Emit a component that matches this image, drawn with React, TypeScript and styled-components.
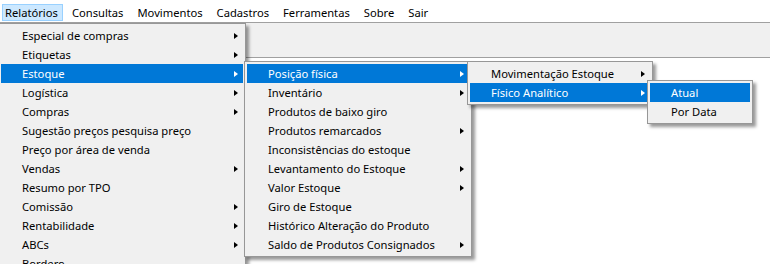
import styled, { createGlobalStyle } from "styled-components";

const GlobalStyle = createGlobalStyle`
  html, body {
    margin: 0;
    padding: 0;
    width: 770px;
    height: 264px;
    overflow: hidden;
    background: #ffffff;
  }
  body {
    font-family: "Noto Sans", "Open Sans", sans-serif;
    font-size: 11.2px;
    color: #000;
  }
`;

type Item = { label: string; sub?: boolean; open?: Submenu };
type Submenu = { items: Item[]; width: number; overlap: number };

const topMenu = ["Relatórios", "Consultas", "Movimentos", "Cadastros", "Ferramentas", "Sobre", "Sair"];

const fisico: Submenu = {
  width: 106,
  overlap: 3,
  items: [{ label: "Atual", open: { width: 0, overlap: 0, items: [] } }, { label: "Por Data" }],
};

const posicao: Submenu = {
  width: 186,
  overlap: 2,
  items: [
    { label: "Movimentação Estoque", sub: true },
    { label: "Físico Analítico", sub: true, open: fisico },
  ],
};

const estoque: Submenu = {
  width: 228,
  overlap: -1,
  items: [
    { label: "Posição física", sub: true, open: posicao },
    { label: "Inventário", sub: true },
    { label: "Produtos de baixo giro" },
    { label: "Produtos remarcados", sub: true },
    { label: "Inconsistências do estoque" },
    { label: "Levantamento do Estoque", sub: true },
    { label: "Valor Estoque", sub: true },
    { label: "Giro de Estoque" },
    { label: "Histórico Alteração do Produto" },
    { label: "Saldo de Produtos Consignados", sub: true },
  ],
};

const relatorios: Item[] = [
  { label: "Especial de compras", sub: true },
  { label: "Etiquetas", sub: true },
  { label: "Estoque", sub: true, open: estoque },
  { label: "Logística", sub: true },
  { label: "Compras", sub: true },
  { label: "Sugestão preços pesquisa preço" },
  { label: "Preço por área de venda" },
  { label: "Vendas", sub: true },
  { label: "Resumo por TPO" },
  { label: "Comissão", sub: true },
  { label: "Rentabilidade", sub: true },
  { label: "ABCs", sub: true },
  { label: "Bordero" },
];

const MenuList = ({ items }: { items: Item[] }) => (
  <>
    {items.map((it) => {
      const active = !!it.open;
      return (
        <MenuItem key={it.label} $active={active}>
          <span>{it.label}</span>
          {it.sub && <Arrow $active={active} />}
          {it.open && it.open.items.length > 0 && (
            <SubMenu $width={it.open.width} $overlap={it.open.overlap}>
              <MenuList items={it.open.items} />
            </SubMenu>
          )}
        </MenuItem>
      );
    })}
  </>
);

const App: React.FC = () => {
  return (
    <Screen>
      <GlobalStyle />
      <MenuBar>
        {topMenu.map((m, i) => (
          <BarItem key={m} $open={i === 0}>
            {m}
            {i === 0 && (
              <DropMenu>
                <MenuList items={relatorios} />
              </DropMenu>
            )}
          </BarItem>
        ))}
      </MenuBar>
      <ToolPanel />
    </Screen>
  );
};

const Screen = styled.div`
  width: 770px;
  height: 264px;
  overflow: hidden;
  background: #fff;
`;

const MenuBar = styled.div`
  height: 22px;
  display: flex;
  align-items: flex-start;
  padding-top: 4px;
  box-sizing: border-box;
  background: #fff;
  position: relative;
  z-index: 2;
`;

const BarItem = styled.div<{ $open?: boolean }>`
  position: relative;
  margin: 0 4px 0 2px;
  padding: 0 4px 0 2px;
  height: 17px;
  line-height: 15px;
  box-sizing: border-box;
  border: 1px solid ${(p) => (p.$open ? "#99d1ff" : "transparent")};
  background: ${(p) => (p.$open ? "#cce8ff" : "transparent")};
  white-space: nowrap;
`;

const ToolPanel = styled.div`
  height: 34px;
  background: #f0f0f0;
  border-top: 1px solid #a0a0a0;
  border-bottom: 1px solid #a0a0a0;
`;

const MenuPanel = styled.div`
  position: absolute;
  box-sizing: border-box;
  padding: 2px;
  background: #f0f0f0;
  border: 1px solid #979797;
  box-shadow: 3px 3px 3px rgba(0, 0, 0, 0.4);
  line-height: normal;
`;

const DropMenu = styled(MenuPanel)`
  left: -5px;
  top: 18px;
  width: 248px;
`;

const SubMenu = styled(MenuPanel)<{ $width: number; $overlap: number }>`
  left: calc(100% - ${(p) => p.$overlap}px);
  top: -3px;
  width: ${(p) => p.$width}px;
`;

const MenuItem = styled.div<{ $active?: boolean }>`
  position: relative;
  height: 19px;
  display: flex;
  align-items: center;
  justify-content: space-between;
  padding: 0 5px 0 21px;
  background: ${(p) => (p.$active ? "#0078d7" : "transparent")};
  color: ${(p) => (p.$active ? "#fff" : "#000")};
  white-space: nowrap;
`;

const Arrow = styled.i<{ $active?: boolean }>`
  display: block;
  width: 0;
  height: 0;
  border-top: 3.5px solid transparent;
  border-bottom: 3.5px solid transparent;
  border-left: 4px solid ${(p) => (p.$active ? "#fff" : "#000")};
`;

export default App;
